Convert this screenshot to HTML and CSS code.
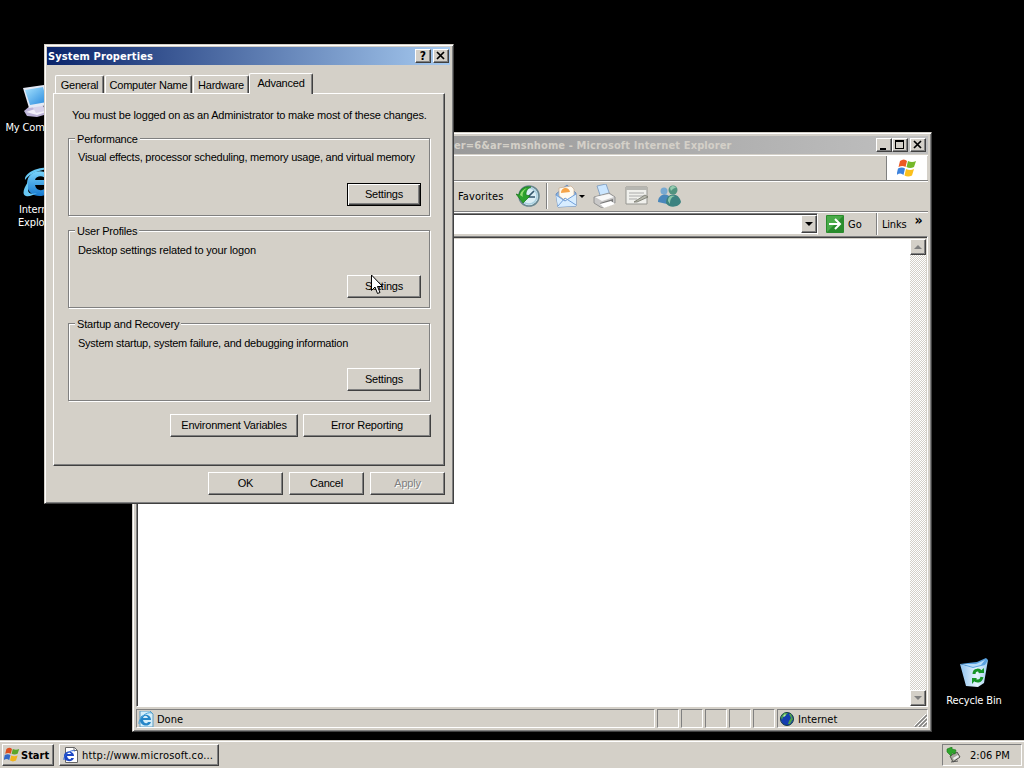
FILE: index.html
```html
<!DOCTYPE html>
<html lang="en">
<head>
    <meta charset="UTF-8">
    <title>Desktop</title>
    <link rel="stylesheet" href="styles.css">
</head>
<body>
    <div class="desktop">
        <div class="icon my-computer">
            <svg width="34" height="34" viewBox="0 0 34 34">
                <defs>
                    <linearGradient id="screen" x1="0" y1="0" x2="1" y2="1">
                        <stop offset="0" stop-color="#a8e4ff"/>
                        <stop offset="1" stop-color="#2486dc"/>
                    </linearGradient>
                </defs>
                <path d="M3 27l7-6 18 2 2 6-14 4-10-1z" fill="#bdb4d8"/>
                <path d="M5 28l12-4 11 3-12 4z" fill="#f2effa"/>
                <path d="M11 22h11l2 5-9 2z" fill="#d8d2ea"/>
                <path d="M2 4l21-3 5 20-20 3z" fill="#e4e9f5"/>
                <path d="M4 6l18-3 4 15-17 3z" fill="url(#screen)"/>
            </svg>
            <span>My Computer</span>
        </div>
        <div class="icon explorer">
            <svg width="34" height="34" viewBox="0 0 34 34">
                <defs>
                    <linearGradient id="ie" x1="0" y1="0" x2="0" y2="1">
                        <stop offset="0" stop-color="#7ad4fb"/>
                        <stop offset="1" stop-color="#1578cf"/>
                    </linearGradient>
                </defs>
                <path d="M32 19H14c1 6 8 7 11 2h7c-5 13-26 12-26-3C6 1 32 1 32 19zM14 14h11c-1-5-10-5-11 0z" fill="url(#ie)"/>
                <path d="M31 3C21-1 3 6 4 14 9 7 20 3 31 3zM7 16C2 23 1 29 5 30c3 1 7-1 11-3-6 2-9 0-9-3z" fill="#68c8f4"/>
            </svg>
            <span>Internet<br>Explorer</span>
        </div>
        <div class="icon recycle">
            <svg width="32" height="32" viewBox="0 0 32 32">
                <defs>
                    <linearGradient id="bin" x1="0" y1="0" x2="1" y2="0">
                        <stop offset="0" stop-color="#8fc2ee"/>
                        <stop offset=".6" stop-color="#e6f4fd"/>
                        <stop offset="1" stop-color="#9fcdf0"/>
                    </linearGradient>
                </defs>
                <path d="M2 7l13 3 15-7-4 23-6 4-12-1z" fill="url(#bin)"/>
                <path d="M2 7l8-1 9-1 9-4 2 2-3 5-12 3z" fill="#5aa2e0"/>
                <path d="M5 7l13 0 9-4-4 5-8 2z" fill="#b8dcf8"/>
                <g fill="none" stroke="#169427" stroke-width="3">
                    <path d="M16 17c0-5 6-5 7-1"/>
                    <path d="M24 20c-1 5-6 5-8 2"/>
                </g>
                <path d="M20 16h6v-5zM19 21h-5v6z" fill="#169427"/>
            </svg>
            <span>Recycle Bin</span>
        </div>

        <div class="window browser">
            <div class="titlebar inactive">
                <span class="title">er=6&amp;ar=msnhome - Microsoft Internet Explorer</span>
                <div class="caption-btn"><svg width="12" height="10"><path d="M2 8h6v2H2z"/></svg></div>
                <div class="caption-btn"><svg width="12" height="10"><path d="M1 0h9v9H1zM2 2v6h7V2z" fill-rule="evenodd"/></svg></div>
                <div class="caption-btn close"><svg width="12" height="10"><path d="M2 1l7 7M9 1L2 8" stroke="#000" stroke-width="1.7"/></svg></div>
            </div>
            <div class="menubar">
                <div class="throbber">
                    <svg width="20" height="19" viewBox="0 0 20 19">
                        <path d="M3 2q4-3 7 0L8.500 8q-3-2-7 0z" fill="#ec5a24"/>
                        <path d="M11 2q4 2 8 0l-2 6q-4 2-7.500 0z" fill="#74b82a"/>
                        <path d="M1 9.500q4-2 7 0L6.500 16q-3-3-7 0z" fill="#3c82dc"/>
                        <path d="M9 10q4 2 8 0l-2 6.500q-4 2-7.500 0z" fill="#fbc01c"/>
                    </svg>
                </div>
            </div>
            <div class="toolbar">
                <span class="favorites">Favorites</span>
                <svg class="history" width="24" height="24" viewBox="0 0 24 24">
                    <circle cx="13" cy="12" r="10" fill="#dbeef5" stroke="#698791" stroke-width="1.600"/>
                    <circle cx="13" cy="12" r="8" fill="none" stroke="#a9cfdf" stroke-width="1.500"/>
                    <path d="M12 13l6-6M12 13h7" stroke="#33566c" stroke-width="1.700"/>
                    <path d="M0 10l3 1C4 4 10 2 15 3c-4 2-5 4-5 8l4 1-7 7z" fill="#2ba22c" stroke="#167617" stroke-width=".7"/>
                    <path d="M4 11c1-4 4-6 7-7-4 3-5 6-4 9z" fill="#94dc72"/>
                </svg>
                <i class="separator"></i>
                <svg class="mail" width="23" height="24" viewBox="0 0 23 24">
                    <path d="M1 10L12 1l9 8v13L3 23z" fill="#86b5e7" stroke="#6d8fbe"/>
                    <path d="M4 4l12-2 3 3v9l-8 3-7-5z" fill="#fffaf0" stroke="#c5a98c" stroke-width=".7"/>
                    <path d="M6 9c0-6 8-7 9-1z" fill="#f6a448"/>
                    <path d="M1 11l9 6 11-7v12L3 23z" fill="#d8edff"/>
                    <path d="M3 22l7-8 11 7M1 11l9 6 11-7" fill="none" stroke="#719fda"/>
                </svg>
                <i class="arrow"></i>
                <svg class="print" width="24" height="24" viewBox="0 0 24 24">
                    <path d="M4 2l9-2 4 11-9 3z" fill="#cbe6ff" stroke="#7898bd" stroke-width=".8"/>
                    <path d="M1 13l15-4 6 4v6l-13 5-8-5z" fill="#c9c8c8" stroke="#858585" stroke-width=".8"/>
                    <path d="M2 13l14-3 5 3-12 4z" fill="#f8f8f8"/>
                    <path d="M7 19l13-4v3L9 22z" fill="#777"/>
                    <path d="M7 20l11-3 4 3-11 4z" fill="#fff"/>
                </svg>
                <svg class="edit" width="24" height="20" viewBox="0 0 24 20">
                    <path d="M1 1h21v17H1z" fill="#f0f0ec" stroke="#959590"/>
                    <path d="M1 1h21v3H1z" fill="#b6b6b1"/>
                    <path d="M4 7h15M4 10h15M4 13h8" stroke="#aaa"/>
                    <path d="M9 16l11-7 3 2-11 5z" fill="#b7b8ad" stroke="#73756b" stroke-width=".8"/>
                </svg>
                <svg class="messenger" width="24" height="22" viewBox="0 0 24 22">
                    <circle cx="6" cy="6" r="3.500" fill="#78a9d1"/>
                    <path d="M0 17c0-9 11-10 13-3l-4 5z" fill="#4987bb"/>
                    <circle cx="15" cy="5" r="4.500" fill="#51937f"/>
                    <path d="M8 18c0-11 13-11 15-1-2 6-13 6-15 1z" fill="#3c8280"/>
                    <path d="M10 16c0-5 3-6 7-5-4 1-5 4-5 8z" fill="#8ac7a8"/>
                    <path d="M12 3c2-3 5-2 6 0-3 0-4 2-5 3z" fill="#94ccae"/>
                </svg>
            </div>
            <div class="addressbar">
                <div class="combo"><div class="combo-btn"><i class="arrow"></i></div></div>
                <svg class="go" width="18" height="18" viewBox="0 0 18 18">
                    <rect width="18" height="18" rx="1" fill="#2a8c2d"/>
                    <path d="M1 1h16L1 17z" fill="#4aab49"/>
                    <path d="M3 9h11M9 4l5 5-5 5" fill="none" stroke="#fff" stroke-width="2"/>
                </svg>
                <span class="go-text">Go</span>
                <div class="links">Links <b>»</b></div>
            </div>
            <div class="view">
                <div class="page"></div>
                <div class="scrollbar">
                    <div class="scroll-btn"><i class="up"></i></div>
                    <div class="scroll-btn"><i class="down"></i></div>
                </div>
            </div>
            <div class="statusbar">
                <div class="pane status">
                    <svg width="16" height="16" viewBox="0 0 16 16">
                        <path d="M2 0h10l3 3v13H2z" fill="#d6effa" stroke="#5d9bc1"/>
                        <path d="M13 9H5c1 4 4 4 5 2h3c-2 6-11 4-11-2 0-7 11-7 11 0zM5 7h5c-1-3-4-3-5 0z" fill="#2686c8"/>
                        <path d="M14 2C8 0 0 8 1 13" fill="none" stroke="#48a4db"/>
                    </svg>
                    <span>Done</span>
                </div>
                <div class="pane"></div>
                <div class="pane"></div>
                <div class="pane"></div>
                <div class="pane"></div>
                <div class="pane"></div>
                <div class="pane zone">
                    <svg width="14" height="14" viewBox="0 0 14 14">
                        <circle cx="7" cy="7" r="6.500" fill="#143db0" stroke="#143c42"/>
                        <path d="M1 5l3-4 4 0-3 3-2 1-1 3zM9 2l2 0 2 5-3 5-2 0 1-3 2-3z" fill="#4da34a"/>
                        <path d="M3 4l2-2 1 1-2 2z" fill="#b7e6b0"/>
                    </svg>
                    <span>Internet</span>
                    <svg class="grip" width="13" height="13"><path d="M1 13L13 1M5 13l8-8M9 13l4-4" stroke="#808080" stroke-width="1.500"/><path d="M0 12L12 0M4 12l9-9M8 12l5-5" stroke="#fff"/></svg>
                </div>
            </div>
        </div>

        <div class="window dialog">
            <div class="titlebar">
                <span class="title">System Properties</span>
                <div class="caption-btn help">?</div>
                <div class="caption-btn close"><svg width="12" height="10"><path d="M2 1l7 7M9 1L2 8" stroke="#000" stroke-width="1.7"/></svg></div>
            </div>
            <div class="tabs">
                <div class="tab general"><span>General</span></div>
                <div class="tab name"><span>Computer Name</span></div>
                <div class="tab hardware"><span>Hardware</span></div>
                <div class="tab active"><span>Advanced</span></div>
            </div>
            <div class="panel">
                <p class="note">You must be logged on as an Administrator to make most of these changes.</p>
                <div class="group performance">
                    <h3>Performance</h3>
                    <p>Visual effects, processor scheduling, memory usage, and virtual memory</p>
                    <button class="default">Settings</button>
                </div>
                <div class="group profiles">
                    <h3>User Profiles</h3>
                    <p>Desktop settings related to your logon</p>
                    <button>Settings</button>
                </div>
                <div class="group startup">
                    <h3>Startup and Recovery</h3>
                    <p>System startup, system failure, and debugging information</p>
                    <button>Settings</button>
                </div>
                <div class="panel-buttons">
                    <button>Environment Variables</button>
                    <button>Error Reporting</button>
                </div>
            </div>
            <div class="dialog-buttons">
                <button>OK</button>
                <button>Cancel</button>
                <button disabled>Apply</button>
            </div>
        </div>

        <div class="taskbar">
            <div class="task start">
                <svg width="16" height="16" viewBox="0 0 20 19">
                    <path d="M3 2q4-3 7 0L8.500 8q-3-2-7 0z" fill="#dd4f20"/>
                    <path d="M11 2q4 2 8 0l-2 6q-4 2-7.500 0z" fill="#5ca62a"/>
                    <path d="M1 9.500q4-2 7 0L6.500 16q-3-3-7 0z" fill="#3469c8"/>
                    <path d="M9 10q4 2 8 0l-2 6.500q-4 2-7.500 0z" fill="#f0b41c"/>
                </svg>
                <b>Start</b>
            </div>
            <div class="task page-task">
                <svg width="16" height="16" viewBox="0 0 16 16">
                    <path d="M2.500 .5h9l3 3v12h-12z" fill="#fff" stroke="#666"/>
                    <path d="M11 .5v3h3.500" fill="none" stroke="#666"/>
                    <path d="M11 9H4c1 4 4 4 4 2h3c-2 5-10 4-10-2 0-6 10-6 10 0zM4 7h4c-1-2-3-2-4 0z" fill="#1c46c4"/>
                    <path d="M12 4C8 2 0 8 1 13" fill="none" stroke="#2c62d4"/>
                </svg>
                <span>http://www.microsoft.co...</span>
            </div>
            <div class="tray">
                <svg width="16" height="16" viewBox="0 0 16 16">
                    <path d="M4 9l7-4 3 5-7 5z" fill="#a8a8a0" stroke="#55564f"/>
                    <path d="M7 11l5-3 1 2-5 3z" fill="#eee"/>
                    <path d="M1 2l5-2v2l4 1-1 4-3-1-1 3-4-4z" fill="#2fa52c" stroke="#187618" stroke-width=".6"/>
                    <path d="M5 15l7-1" stroke="#555"/>
                </svg>
                <span>2:06 PM</span>
            </div>
        </div>

        <svg class="cursor" width="13" height="21" viewBox="0 0 13 21">
            <path d="M.5 1v15.500l3.500-3.500 2.500 6.500 2.500-1-2.500-6H11.500z" fill="#fff" stroke="#000"/>
        </svg>
    </div>
</body>
</html>
```
FILE: styles.css
```css
* {
    box-sizing: border-box;
}

body {
    margin: 0;
    background: #000;
    font: 11px/13px "DejaVu Sans Condensed", "DejaVu Sans", sans-serif;
    color: #000;
}

svg {
    display: block;
    flex: none;
}

p, h3 {
    margin: 0;
    font-size: 11px;
    font-weight: normal;
}

.desktop {
    position: relative;
    width: 1024px;
    height: 768px;
    overflow: hidden;
    white-space: nowrap;
}

/* desktop icons */
.icon {
    position: absolute;
    display: flex;
    flex-direction: column;
    align-items: center;
    gap: 3px;
    width: 76px;
    color: #fff;
    text-align: center;
    letter-spacing: -.15px;
}

.my-computer { left: 0; top: 84px; }
.explorer { left: 0; top: 166px; }
.recycle { left: 936px; top: 657px; gap: 5px; }

/* windows */
.window {
    position: absolute;
    display: flex;
    flex-direction: column;
    padding: 3px;
    background: #d4d0c8;
    border: 1px solid;
    border-color: #d4d0c8 #404040 #404040 #d4d0c8;
    box-shadow: inset 1px 1px #fff, inset -1px -1px #808080;
}

.titlebar {
    display: flex;
    align-items: center;
    flex: none;
    height: 18px;
    background: linear-gradient(90deg, #0a246a, #a6caf0);
    color: #fff;
    font-weight: bold;
    letter-spacing: .12px;
}

.titlebar.inactive {
    padding: 0 2px 0 318px;
    background: linear-gradient(90deg, #808080, #c0c0c0);
    color: #d4d0c8;
}

.title {
    flex: 1;
}

.caption-btn {
    display: flex;
    justify-content: center;
    width: 16px;
    height: 14px;
    padding-top: 1px;
    background: #d4d0c8;
    border: 1px solid;
    border-color: #fff #404040 #404040 #fff;
    box-shadow: inset -1px -1px #808080;
    color: #000;
    line-height: 11px;
}

.caption-btn.close {
    margin-left: 2px;
}

.arrow {
    border: 3px solid transparent;
    border-top-color: #000;
    border-bottom: 0;
}

/* browser */
.browser {
    left: 132px;
    top: 132px;
    width: 800px;
    height: 600px;
}

.menubar {
    display: flex;
    justify-content: flex-end;
    flex: none;
    height: 27px;
    margin-top: 1px;
    border-top: 1px solid #fff;
    border-bottom: 1px solid #fff;
    box-shadow: inset 0 -1px #808080;
}

.throbber {
    display: flex;
    align-items: center;
    justify-content: center;
    width: 41px;
    margin-right: 1px;
    background: #fff;
    border-left: 1px solid #808080;
    box-shadow: inset 0 -1px #808080;
}

.toolbar {
    display: flex;
    align-items: center;
    flex: none;
    height: 30px;
    padding: 0 0 1px 322px;
    border-bottom: 1px solid #808080;
}

.favorites { width: 58px; letter-spacing: .1px; }
.separator {
    width: 2px;
    height: 26px;
    margin: 0 7px 0 6px;
    border-left: 1px solid #808080;
    border-right: 1px solid #fff;
}
.mail { margin-right: 1px; }
.print { margin-left: 8px; }
.edit { margin-left: 8px; }
.messenger { margin-left: 9px; }

.addressbar {
    display: flex;
    align-items: center;
    flex: none;
    height: 24px;
    padding-bottom: 1px;
    border-top: 1px solid #fff;
}

.combo {
    display: flex;
    justify-content: flex-end;
    width: 682px;
    height: 22px;
    background: #fff;
    border: 1px solid;
    border-color: #808080 #fff #d4d0c8 #808080;
    box-shadow: inset 1px 1px #404040;
    padding: 1px 0 1px 1px;
}

.combo-btn {
    display: flex;
    align-items: center;
    justify-content: center;
    width: 16px;
    background: #d4d0c8;
    border: 1px solid;
    border-color: #fff #404040 #404040 #fff;
    box-shadow: inset -1px -1px #808080;
}

.combo-btn .arrow {
    border-width: 4px 4px 0;
}

.go { margin-left: 8px; }
.go-text { width: 29px; margin-left: 4px; }

.links {
    display: flex;
    flex: 1;
    align-self: stretch;
    align-items: center;
    gap: 8px;
    padding-left: 4px;
    border-left: 1px solid #fff;
    box-shadow: -1px 0 #808080;
    letter-spacing: -.2px;
}

.links b {
    margin-top: -7px;
    font-size: 14px;
}

.view {
    display: flex;
    flex: 1;
    min-height: 0;
    border: 1px solid;
    border-color: #808080 #fff #fff #808080;
    box-shadow: inset 1px 1px #404040;
    padding: 2px 0 0 1px;
}

.page {
    flex: 1;
    background: #fff;
}

.scrollbar {
    display: flex;
    flex-direction: column;
    justify-content: space-between;
    width: 16px;
    margin-right: 1px;
    background: repeating-conic-gradient(#fff 0 25%, #d4d0c8 0 50%) 0 0 / 2px 2px;
}

.scroll-btn {
    display: flex;
    align-items: center;
    justify-content: center;
    height: 16px;
    background: #d4d0c8;
    border: 1px solid;
    border-color: #fff #404040 #404040 #fff;
    box-shadow: inset -1px -1px #808080;
}

.up, .down {
    border: 4px solid transparent;
}

.up { border-bottom-color: #808080; border-top: 0; }
.down { border-top-color: #808080; border-bottom: 0; }

.statusbar {
    display: flex;
    flex: none;
    gap: 2px;
    height: 21px;
    padding-top: 2px;
}

.pane {
    display: flex;
    align-items: center;
    width: 22px;
    padding-top: 1px;
    border: 1px solid;
    border-color: #808080 #fff #fff #808080;
}

.pane.status {
    flex: 1;
    gap: 3px;
    padding-left: 1px;
}

.pane.zone {
    width: 151px;
    gap: 4px;
    padding-left: 2px;
}

.grip {
    margin-left: auto;
    align-self: flex-end;
}

/* system properties */
.dialog {
    left: 44px;
    top: 44px;
    width: 410px;
    height: 460px;
    padding: 2px 3px 3px 2px;
    font-family: "Liberation Sans", Arial, sans-serif;
    letter-spacing: -.21px;
}

.dialog .titlebar {
    padding: 0 1px;
    font-family: "DejaVu Sans Condensed", "DejaVu Sans", sans-serif;
}

.help {
    font-size: 12px;
}

.tabs {
    display: flex;
    align-items: flex-end;
    flex: none;
    height: 28px;
    padding-left: 8px;
}

.tab {
    height: 18px;
    padding-top: 3px;
    border: 1px solid;
    border-color: #fff #404040 transparent #fff;
    border-bottom: 0;
    border-radius: 2px 2px 0 0;
    box-shadow: inset -1px 0 #808080;
    text-align: center;
}

.general { width: 49px; }
.name { width: 87px; margin-left: 1px; }
.hardware { width: 56px; margin-left: 1px; }

.tab.active {
    position: relative;
    z-index: 1;
    width: 64px;
    height: 21px;
    margin-bottom: -1px;
    background: #d4d0c8;
}

.panel {
    display: flex;
    flex-direction: column;
    flex: none;
    height: 373px;
    margin: 0 5px 0 6px;
    padding: 15px 13px 0 14px;
    border: 1px solid;
    border-color: #fff #404040 #404040 #fff;
    box-shadow: inset -1px -1px #808080;
}

.note {
    padding-left: 4px;
    letter-spacing: -.19px;
}

.group {
    display: flex;
    flex-direction: column;
    height: 78px;
    margin: 16px 1px 0 0;
    padding: 0 8px 9px 9px;
    border: 1px solid #808080;
    box-shadow: 1px 1px #fff, inset 1px 1px #fff;
}

.group h3 {
    align-self: flex-start;
    margin: -6px 0 0 -3px;
    padding: 0 2px;
    background: #d4d0c8;
}

.group p {
    margin-top: 6px;
    letter-spacing: -.24px;
}

.performance p { margin-top: 5px; }
.profiles { margin-top: 14px; }
.profiles p { letter-spacing: -.18px; }
.startup { margin-top: 15px; }

button {
    height: 23px;
    padding: 0 0 1px;
    background: #d4d0c8;
    border: 1px solid;
    border-color: #fff #404040 #404040 #fff;
    box-shadow: inset -1px -1px #808080;
    font: inherit;
    letter-spacing: inherit;
    color: #000;
}

button:disabled {
    color: #808080;
    text-shadow: 1px 1px #fff;
}

button.default {
    border-color: #000;
    box-shadow: inset 1px 1px #fff, inset -1px -1px #404040, inset -2px -2px #808080;
}

.group button {
    width: 74px;
    margin: auto 0 0 auto;
}

.panel-buttons {
    display: flex;
    justify-content: flex-end;
    gap: 5px;
    margin-top: 13px;
}

.panel-buttons button {
    width: 128px;
}

.dialog-buttons {
    display: flex;
    justify-content: flex-end;
    gap: 6px;
    margin: 6px 5px 0 0;
}

.dialog-buttons button {
    width: 75px;
}

/* taskbar */
.taskbar {
    position: absolute;
    left: 0;
    bottom: 0;
    display: flex;
    width: 1024px;
    height: 28px;
    padding: 4px 2px 2px;
    background: #d4d0c8;
    box-shadow: inset 0 1px #d4d0c8, inset 0 2px #fff;
}

.task {
    display: flex;
    align-items: center;
    border: 1px solid;
    border-color: #fff #404040 #404040 #fff;
    box-shadow: inset -1px -1px #808080;
}

.start {
    width: 52px;
    gap: 1px;
    padding-left: 1px;
}

.page-task {
    width: 160px;
    margin-left: 5px;
    padding-left: 3px;
    gap: 3px;
    letter-spacing: .17px;
}

.tray {
    display: flex;
    align-items: center;
    gap: 8px;
    width: 80px;
    margin-left: auto;
    padding-left: 3px;
    border: 1px solid;
    border-color: #808080 #fff #fff #808080;
}

.cursor {
    position: absolute;
    left: 371px;
    top: 274px;
}
```
